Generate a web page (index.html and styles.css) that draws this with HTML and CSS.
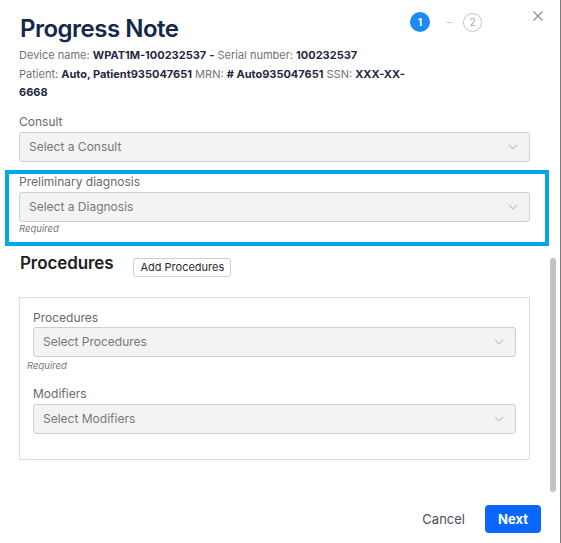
FILE: index.html
```html
<!DOCTYPE html>
<html lang="en">
<head>
<meta charset="utf-8">
<title>Progress Note</title>
<link rel="stylesheet" href="styles.css">
</head>
<body>
<div class="modal">
  <header class="head">
    <div class="head-main">
      <h1 class="title">Progress Note</h1>
      <p class="meta">
        <span class="k">Device name:</span> <b>WPAT1M-100232537</b> <b>-</b> <span class="k">Serial number:</span> <b>100232537</b><br>
        <span class="k">Patient:</span> <b>Auto, Patient935047651</b> <span class="k">MRN:</span> <b># Auto935047651</b> <span class="k">SSN:</span> <b>XXX-XX-</b><br><b>6668</b>
      </p>
    </div>
    <div class="steps">
      <span class="step step-active">1</span>
      <span class="step-dash"></span>
      <span class="step step-idle">2</span>
    </div>
    <button class="close" aria-label="Close">
      <svg width="10" height="10" viewBox="0 0 10 10"><path d="M0.5 0.5 L9.5 9.5 M9.5 0.5 L0.5 9.5" stroke="#8a8a8a" stroke-width="1.1" fill="none"/></svg>
    </button>
  </header>

  <main class="body">
    <div class="field field-first">
      <label class="label">Consult</label>
      <div class="select"><span>Select a Consult</span><svg class="chev" width="10" height="6" viewBox="0 0 10 6"><path d="M1 1 L5 5 L9 1" stroke="#c6c6c6" stroke-width="1.2" fill="none"/></svg></div>
    </div>

    <div class="highlight">
      <label class="label">Preliminary diagnosis</label>
      <div class="select"><span>Select a Diagnosis</span><svg class="chev" width="10" height="6" viewBox="0 0 10 6"><path d="M1 1 L5 5 L9 1" stroke="#c6c6c6" stroke-width="1.2" fill="none"/></svg></div>
      <div class="req">Required</div>
    </div>

    <div class="proc-row">
      <h2 class="proc-title">Procedures</h2>
      <button class="add-btn">Add Procedures</button>
    </div>

    <div class="proc-box">
      <label class="label">Procedures</label>
      <div class="select"><span>Select Procedures</span><svg class="chev" width="10" height="6" viewBox="0 0 10 6"><path d="M1 1 L5 5 L9 1" stroke="#c6c6c6" stroke-width="1.2" fill="none"/></svg></div>
      <div class="req req-out">Required</div>
      <label class="label label-mod">Modifiers</label>
      <div class="select"><span>Select Modifiers</span><svg class="chev" width="10" height="6" viewBox="0 0 10 6"><path d="M1 1 L5 5 L9 1" stroke="#c6c6c6" stroke-width="1.2" fill="none"/></svg></div>
    </div>
  </main>

  <footer class="foot">
    <button class="cancel">Cancel</button>
    <button class="next">Next</button>
  </footer>

  <div class="scrollbar"></div>
</div>
</body>
</html>
```
FILE: styles.css
```css
* { box-sizing: border-box; }
html, body { margin: 0; padding: 0; background: #fff; }
body { font-family: Inter, "Noto Sans", "Liberation Sans", sans-serif; }

.modal {
  position: relative;
  width: 561px;
  height: 543px;
  border-right: 1px solid #7c7c7c;
  display: flex;
  flex-direction: column;
  overflow: hidden;
  background: #fff;
}

.head {
  display: flex;
  align-items: flex-start;
  padding: 12px 0 0 20px;
}
.head-main { width: 390px; flex: none; }
.title {
  margin: 2px 0 2px 0;
  font-size: 24px;
  line-height: 30px;
  font-weight: 600;
  color: #13284a;
  letter-spacing: -0.5px;
}
.meta {
  margin: 0;
  margin-left: -1px;
  font-size: 11px;
  line-height: 18.5px;
  color: #1d2b45;
}
.meta .k { color: #6f7378; }
.meta b { font-weight: 700; color: #1f2a3f; }

.steps {
  display: flex;
  align-items: center;
  margin-top: 0;
}
.step {
  width: 20px;
  height: 20px;
  border-radius: 50%;
  display: flex;
  align-items: center;
  justify-content: center;
  font-size: 10px;
  font-weight: 700;
}
.step-active { background: #1c8af3; color: #fff; }
.step-idle { border: 1px solid #c4c4c4; color: #b3b3b3; font-weight: 500; width: 19px; height: 19px; }
.step-dash { width: 7px; height: 1px; background: #d4d4d4; margin: 0 10px 0 16px; }

.close {
  margin: -1px 0 0 51px;
  padding: 0;
  border: 0;
  background: none;
  width: 10px;
  height: 10px;
  display: block;
}
.close svg { display: block; }

.body {
  flex: 1;
  padding: 0 0 0 19px;
}

.field { width: 511px; }
.field-first { margin-top: 12px; }

.label {
  display: block;
  font-size: 12px;
  line-height: 16px;
  color: #6a6a6a;
}
.select {
  margin-top: 2px;
  height: 30px;
  background: #f3f3f3;
  border: 1px solid #cfcfcf;
  border-radius: 3px;
  display: flex;
  align-items: center;
  justify-content: space-between;
  padding: 0 11px 0 9px;
  font-size: 12px;
  color: #787878;
}
.chev { display: block; }

.req {
  margin-top: 1px;
  font-size: 9.5px;
  line-height: 12px;
  font-style: italic;
  color: #777;
}

.highlight {
  margin: 8px 0 0 -14px;
  width: 544px;
  border: 4px solid #00a8e9;
  padding: 0 15px 7px 10px;
}

.proc-row {
  display: flex;
  align-items: flex-start;
  gap: 20px;
  margin-top: 12px;
  padding-left: 1px;
}
.proc-title {
  margin: -5px 0 0 0;
  font-size: 17px;
  line-height: 20px;
  font-weight: 600;
  color: #212121;
  letter-spacing: -0.1px;
}
.add-btn {
  height: 19px;
  padding: 0 6px;
  background: #fff;
  border: 1px solid #cfcfcf;
  border-radius: 3px;
  font-family: inherit;
  font-size: 11px;
  color: #2b2b2b;
}

.proc-box {
  margin-top: 20px;
  width: 511px;
  border: 1px solid #dcdce6;
  padding: 12px 13px 25px 13px;
}
.proc-box .select { margin-top: 1px; }
.req-out { margin: 3px 0 0 -6px; }
.label-mod { margin-top: 14px; }
.proc-box .label-mod + .select { margin-top: 2px; }

.foot {
  display: flex;
  justify-content: flex-end;
  align-items: center;
  gap: 20px;
  padding: 0 19px 10px 0;
}
.cancel {
  border: 0;
  background: none;
  padding: 0;
  font-family: inherit;
  font-size: 13px;
  color: #4a5160;
}
.next {
  height: 28px;
  width: 56px;
  border: 0;
  border-radius: 4px;
  background: #0a66fc;
  color: #fff;
  font-family: inherit;
  font-size: 13px;
  font-weight: 700;
}

.scrollbar {
  position: absolute;
  left: 550px;
  top: 258px;
  width: 6px;
  height: 234px;
  border-radius: 3px;
  background: #c2c2c2;
}
```
